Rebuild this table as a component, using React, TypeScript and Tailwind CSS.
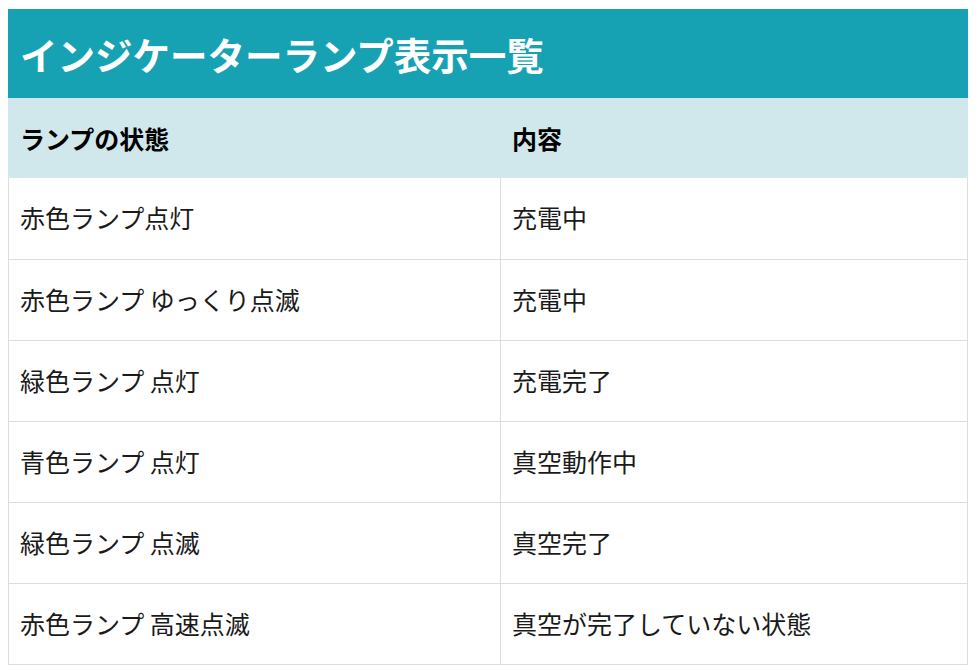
import React from "react";

const rows: [string, string][] = [
  ["赤色ランプ点灯", "充電中"],
  ["赤色ランプ ゆっくり点滅", "充電中"],
  ["緑色ランプ 点灯", "充電完了"],
  ["青色ランプ 点灯", "真空動作中"],
  ["緑色ランプ 点滅", "真空完了"],
  ["赤色ランプ 高速点滅", "真空が完了していない状態"],
];

export default function App() {
  return (
    <div
      className="bg-white min-h-[672px] pl-2 pt-[9px] pr-[11px]"
      style={{ fontFamily: '"Noto Sans CJK JP", "Noto Sans", sans-serif' }}
    >
      <div className="bg-[#17a2b4] h-[89px] flex items-center px-3">
        <h1 className="text-white font-bold text-[37.5px] leading-none">インジケーターランプ表示一覧</h1>
      </div>
      <div className="grid grid-cols-[492px_1fr] bg-[#d0e7eb] h-[80px] items-center">
        <div className="px-3 text-[25px] font-bold text-black leading-none">ランプの状態</div>
        <div className="px-3 text-[25px] font-bold text-black leading-none">内容</div>
      </div>
      <div className="border-l border-r border-b border-[#dddddd]">
        {rows.map(([a, b], i) => (
          <div
            key={i}
            className={`grid grid-cols-[492px_1fr] h-[81px] ${i > 0 ? "border-t border-[#dddddd]" : ""}`}
          >
            <div className="flex items-center px-[11px] pb-[2px] text-[25px] leading-none text-[#1a1a1a] border-r border-[#dddddd]">{a}</div>
            <div className="flex items-center px-[11px] pb-[2px] text-[25px] leading-none text-[#1a1a1a]">{b}</div>
          </div>
        ))}
      </div>
    </div>
  );
}
